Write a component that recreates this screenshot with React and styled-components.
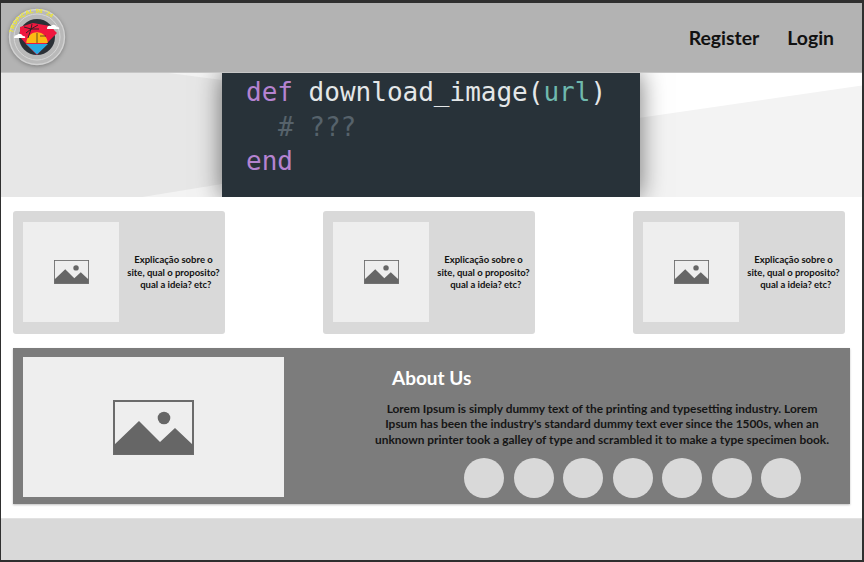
import React from "react";
import styled, { createGlobalStyle } from "styled-components";

const GlobalStyle = createGlobalStyle`
  html, body {
    margin: 0;
    padding: 0;
    background: #2f2f2f;
  }
  * {
    box-sizing: border-box;
  }
`;

const ImageIcon = ({ width, height }) => (
  <svg width={width} height={height} viewBox="0 0 81 55">
    <rect x="1" y="1" width="79" height="53" fill="none" stroke="#6b6b6b" strokeWidth="2" />
    <circle cx="51" cy="18" r="6.3" fill="#666" />
    <path d="M1 45 L26 21 L47 42 L62 28 L80 45 V54 H1 Z" fill="#666" />
  </svg>
);

const Logo = () => (
  <svg width="60" height="60" viewBox="0 0 60 60">
    <defs>
      <path id="logoArc" d="M6 26 A 24 24 0 0 1 44 10.5" />
    </defs>
    <circle cx="30" cy="30" r="27.5" fill="#b9b9b9" stroke="#d2d2d2" strokeWidth="1.4" />
    <circle cx="30" cy="30" r="23" fill="none" stroke="#d6d6d6" strokeWidth="1" />
    <circle cx="30" cy="30" r="18" fill="#2b3036" />
    <path d="M13 20 L26 16 L43 19 L50 26 L41 35 L30 48 L20 38 L13 30 Z" fill="#f0173f" />
    <path d="M19.3 36 A 10.7 10.7 0 0 1 40.7 36 Z" fill="#fdb913" />
    <path d="M19 37 H41 L30 47.5 Z" fill="#29a9e0" />
    <path d="M30 26 V36 M33 29 H39" stroke="#222" strokeWidth="0.7" />
    <path
      d="M24 22 L17 20 M24 22 L19 26 M24 22 L25 17 M24 22 L31 18 M24 22 L32 22 M24 22 L21 31"
      stroke="#222"
      strokeWidth="0.9"
    />
    <path d="M40 22 Q40 18 44 19 Q47 16 50 20 Q53 20 52 22 Z" fill="#fff" />
    <path d="M7 31 Q7 28 10 28 Q13 25 16 29 Q19 29 18 31 Z" fill="#fff" />
    <LogoText>
      <textPath href="#logoArc">TROPICAL 98 '24</textPath>
    </LogoText>
  </svg>
);

const cards = [0, 1, 2];
const circles = [0, 1, 2, 3, 4, 5, 6];

export default function App() {
  return (
    <>
      <GlobalStyle />
      <Frame>
        <Page>
          <Header>
            <LogoWrap>
              <Logo />
            </LogoWrap>
            <Nav>
              <NavLink>Register</NavLink>
              <NavLink>Login</NavLink>
            </Nav>
          </Header>

          <Hero>
            <HeroLeft />
            <CodePanel>
              <CodeLine>
                <Keyword>def</Keyword> download_image(<Param>url</Param>)
              </CodeLine>
              <CodeLine $indent>
                <Comment># ???</Comment>
              </CodeLine>
              <CodeLine>
                <Keyword>end</Keyword>
              </CodeLine>
            </CodePanel>
            <HeroRight />
          </Hero>

          <Cards>
            {cards.map((card) => (
              <Card key={card}>
                <CardImage>
                  <ImageIcon width={35} height={24} />
                </CardImage>
                <CardText>
                  Explicação sobre o
                  <br />
                  site, qual o proposito?
                  <br />
                  &nbsp;&nbsp;qual a ideia? etc?
                </CardText>
              </Card>
            ))}
          </Cards>

          <About>
            <AboutImage>
              <ImageIcon width={81} height={55} />
            </AboutImage>
            <AboutBody>
              <AboutTitle>About Us</AboutTitle>
              <AboutText>
                Lorem Ipsum is simply dummy text of the printing and typesetting industry. Lorem
                <br />
                Ipsum has been the industry's standard dummy text ever since the 1500s, when an
                <br />
                unknown printer took a galley of type and scrambled it to make a type specimen book.
              </AboutText>
              <Socials>
                {circles.map((circle) => (
                  <Social key={circle} />
                ))}
              </Socials>
            </AboutBody>
          </About>

          <Footer />
        </Page>
      </Frame>
    </>
  );
}

const Frame = styled.div`
  width: 864px;
  height: 562px;
  padding: 3px 2px 2px 1px;
  overflow: hidden;
`;

const Page = styled.div`
  display: flex;
  flex-direction: column;
  height: 100%;
  background: #fff;
`;

const Header = styled.header`
  display: flex;
  align-items: center;
  justify-content: space-between;
  flex: none;
  height: 70px;
  padding: 0 28px 0 6px;
  background: #b3b3b3;
  border-bottom: 1px solid #c6c6c6;
`;

const LogoWrap = styled.div`
  display: flex;
  margin-top: -1px;
  filter: drop-shadow(0 1px 2px rgba(0, 0, 0, 0.3));
`;

const LogoText = styled.text`
  font-family: "Liberation Sans", sans-serif;
  font-size: 5.6px;
  font-weight: 700;
  letter-spacing: 0.3px;
  fill: #f5ee20;
`;

const Nav = styled.nav`
  display: flex;
  gap: 28px;
`;

const NavLink = styled.a`
  font-family: Lato, sans-serif;
  font-size: 19.4px;
  font-weight: 700;
  color: #111;
`;

const Hero = styled.section`
  display: flex;
  flex: none;
  height: 124px;
  overflow: hidden;
  background: #fff;
`;

const HeroLeft = styled.div`
  position: relative;
  width: 221px;
  background: #e7e7e7;

  &::before,
  &::after {
    content: "";
    position: absolute;
    left: 0;
    width: 100%;
    background: #f3f3f3;
  }
  &::before {
    top: 0;
    height: 7px;
    clip-path: polygon(76% 0, 100% 0, 100% 100%);
  }
  &::after {
    bottom: 0;
    height: 13px;
    clip-path: polygon(64% 100%, 100% 0, 100% 100%);
  }
`;

const HeroRight = styled.div`
  position: relative;
  flex: 1;
  background: #fff;

  &::after {
    content: "";
    position: absolute;
    inset: 0;
    background: #f3f3f3;
    clip-path: polygon(0 36%, 100% 10%, 100% 100%, 0 100%);
  }
`;

const CodePanel = styled.div`
  position: relative;
  z-index: 1;
  width: 418px;
  padding: 2px 0 0 24px;
  background: #283239;
  box-shadow: 0 0 24px rgba(0, 0, 0, 0.55);
`;

const CodeLine = styled.div`
  height: 34.5px;
  padding-left: ${(props) => (props.$indent ? "32px" : "0")};
  font-family: "DejaVu Sans Mono", monospace;
  font-size: 26px;
  line-height: 35px;
  white-space: pre;
  color: #e4e7e8;
`;

const Keyword = styled.span`
  color: #b583d0;
`;

const Param = styled.span`
  color: #6fb9ae;
`;

const Comment = styled.span`
  color: #56626b;
`;

const Cards = styled.section`
  display: flex;
  justify-content: space-between;
  flex: none;
  padding: 14px 17px 14px 12px;
`;

const Card = styled.article`
  display: flex;
  align-items: center;
  width: 212px;
  height: 123px;
  padding: 0 0 1px 10px;
  background: #d9d9d9;
  border-radius: 3px;
`;

const CardImage = styled.div`
  display: flex;
  align-items: center;
  justify-content: center;
  flex: none;
  width: 96px;
  height: 100px;
  background: #eeeeee;
`;

const CardText = styled.p`
  flex: 1;
  margin: 2px -3px 0 0;
  font-family: Lato, sans-serif;
  font-size: 9.5px;
  font-weight: 700;
  line-height: 12.5px;
  text-align: center;
  color: #111;
`;

const About = styled.section`
  display: flex;
  flex: none;
  gap: 84px;
  height: 156px;
  margin: 0 12px;
  padding: 9px 0 0 10px;
  background: #7c7c7c;
  box-shadow: 0 1px 2px rgba(0, 0, 0, 0.25);
`;

const AboutImage = styled.div`
  display: flex;
  align-items: center;
  justify-content: center;
  flex: none;
  width: 261px;
  height: 140px;
  background: #eeeeee;
`;

const AboutBody = styled.div`
  display: flex;
  flex-direction: column;
  width: 468px;
`;

const AboutTitle = styled.h2`
  margin: 9px 0 0 24px;
  font-family: Lato, sans-serif;
  font-size: 19px;
  font-weight: 700;
  line-height: 24px;
  color: #fff;
`;

const AboutText = styled.p`
  margin: 11px 0 0;
  font-family: Lato, sans-serif;
  font-size: 11.9px;
  font-weight: 700;
  line-height: 15.4px;
  text-align: center;
  white-space: nowrap;
  color: #151515;
`;

const Socials = styled.div`
  display: flex;
  gap: 9.5px;
  margin: 11px 0 0 96px;
`;

const Social = styled.span`
  flex: none;
  width: 40px;
  height: 40px;
  border-radius: 50%;
  background: #d9d9d9;
`;

const Footer = styled.footer`
  flex: 1;
  margin-top: 14px;
  background: #d9d9d9;
  border-top: 1px solid #e2e2e2;
`;
